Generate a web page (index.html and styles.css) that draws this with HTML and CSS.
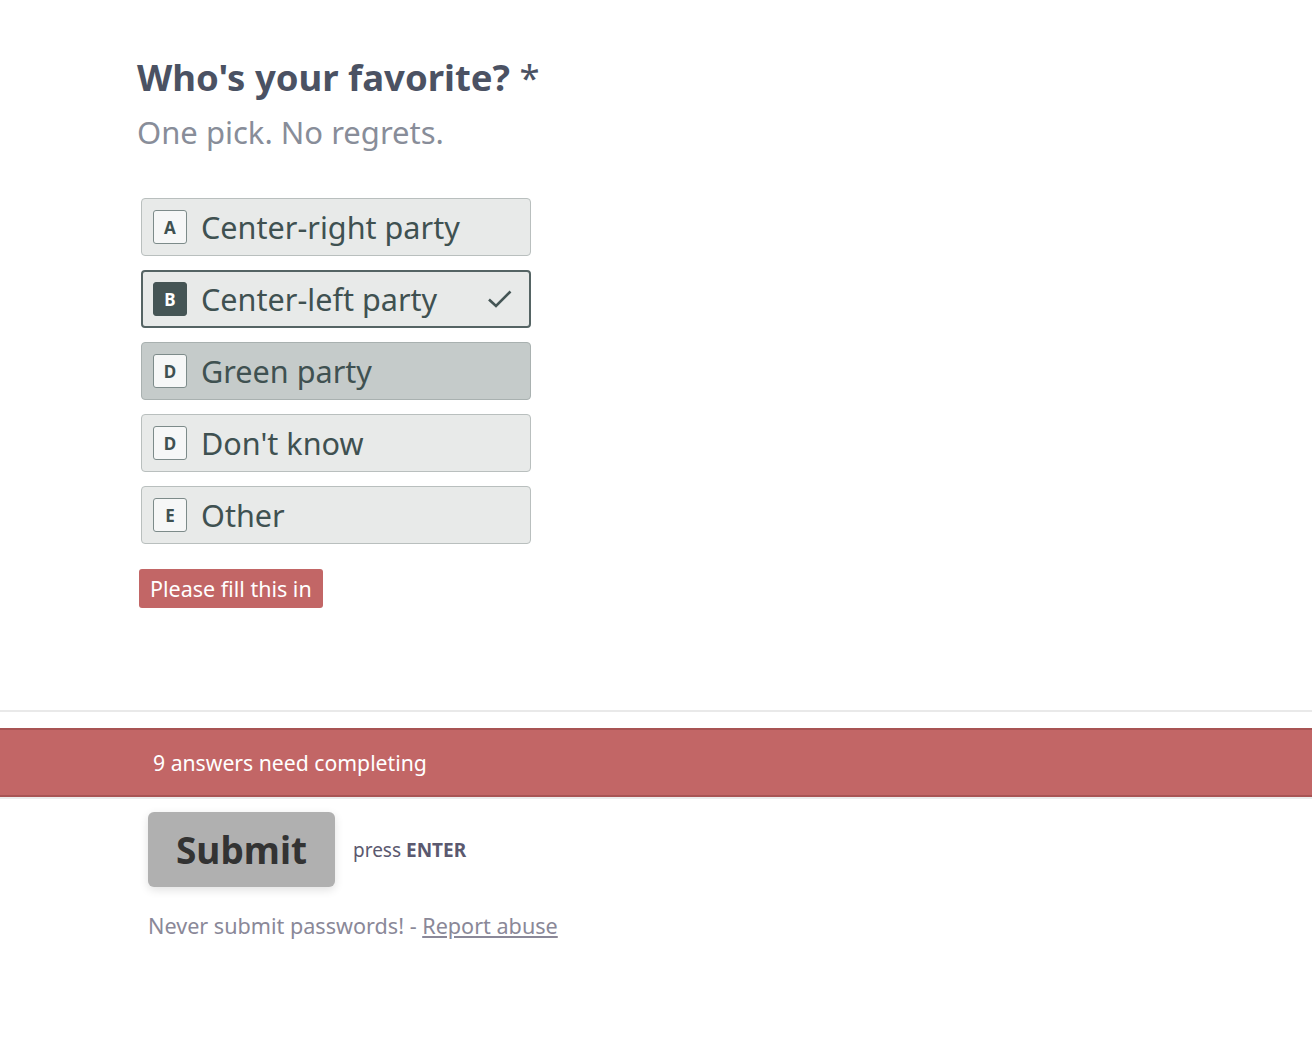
FILE: index.html
```html
<!DOCTYPE html>
<html>
<head>
<meta charset="utf-8">
<link rel="stylesheet" href="styles.css">
</head>
<body>
<main class="question">
  <h1 class="title">Who's your favorite? <span class="req">*</span></h1>
  <p class="subtitle">One pick. No regrets.</p>
  <ul class="options">
    <li class="option"><span class="key">A</span><span class="label">Center-right party</span></li>
    <li class="option selected"><span class="key">B</span><span class="label">Center-left party</span>
      <svg class="check" width="26" height="20" viewBox="0 0 26 20"><path d="M2 10.5 L9 17 L23.5 2.5" fill="none" stroke="#445555" stroke-width="2.6"/></svg>
    </li>
    <li class="option hover"><span class="key">D</span><span class="label">Green party</span></li>
    <li class="option"><span class="key">D</span><span class="label">Don't know</span></li>
    <li class="option"><span class="key">E</span><span class="label">Other</span></li>
  </ul>
  <div class="error">Please fill this in</div>
</main>
<footer class="footer">
  <div class="alert"><span>9 answers need completing</span></div>
  <div class="actions">
    <button class="submit">Submit</button>
    <span class="hint">press <b>ENTER</b></span>
  </div>
  <p class="note">Never submit passwords! - <a href="#" class="abuse">Report abuse</a></p>
</footer>
</body>
</html>
```
FILE: styles.css
```css
html, body {
  margin: 0;
  padding: 0;
  background: #ffffff;
  font-family: "Noto Sans", "Open Sans", sans-serif;
}

.question {
  padding: 52px 0 0 137px;
  height: 710px;
  box-sizing: border-box;
}

.title {
  margin: 0;
  font-size: 36.5px;
  line-height: 50px;
  font-weight: 700;
  color: #4b5263;
}

.req {
  font-weight: 400;
}

.subtitle {
  margin: 10px 0 0 0;
  font-size: 31px;
  line-height: 40px;
  color: #888d99;
}

.options {
  list-style: none;
  margin: 46px 0 0 4px;
  padding: 0;
  display: flex;
  flex-direction: column;
  gap: 14px;
  width: 390px;
}

.option {
  position: relative;
  display: flex;
  align-items: center;
  height: 58px;
  box-sizing: border-box;
  border: 1px solid #b9bfbe;
  border-radius: 4px;
  background: #e8eae9;
  padding-left: 11px;
  color: #3f5151;
}

.option.selected {
  border: 2px solid #556464;
  padding-left: 10px;
}

.option.hover {
  background: #c5cbca;
  border-color: #a9b1b0;
}

.key {
  width: 34px;
  height: 34px;
  box-sizing: border-box;
  border: 1px solid #7d8b8a;
  border-radius: 3px;
  background: #f6f7f7;
  display: flex;
  align-items: center;
  justify-content: center;
  font-size: 17px;
  font-weight: 700;
  color: #3f5151;
}

.selected .key {
  background: #455555;
  border-color: #455555;
  color: #ffffff;
}

.label {
  margin-left: 14px;
  font-size: 30.6px;
  line-height: 40px;
}

.check {
  position: absolute;
  right: 16px;
  top: 17px;
}

.error {
  display: inline-block;
  margin: 25px 0 0 2px;
  background: #c26666;
  color: #ffffff;
  font-size: 21.5px;
  line-height: 39px;
  padding: 0 11px;
  border-radius: 3px;
}

.footer {
  border-top: 2px solid #e9e9e9;
  padding-top: 16px;
}

.alert {
  background: #c26666;
  border-top: 2px solid #a85454;
  border-bottom: 2px solid #a85454;
  height: 69px;
  box-sizing: border-box;
  display: flex;
  align-items: center;
  padding-left: 153px;
  color: #ffffff;
  font-size: 21.2px;
  box-shadow: 0 2px 0 #ececec;
}

.actions {
  display: flex;
  align-items: center;
  padding: 15px 0 0 148px;
}

.submit {
  width: 187px;
  height: 75px;
  border: none;
  border-radius: 6px;
  background: #b0b0b0;
  color: #333333;
  font-family: inherit;
  font-size: 37px;
  font-weight: 700;
  box-shadow: 0 3px 10px rgba(0, 0, 0, 0.12);
  padding: 0;
}

.hint {
  margin-left: 18px;
  font-size: 19px;
  color: #5b596f;
}

.hint b {
  font-weight: 700;
}

.note {
  margin: 24px 0 0 148px;
  font-size: 21.6px;
  color: #8a8898;
}

.abuse {
  color: #8a8898;
}
```
